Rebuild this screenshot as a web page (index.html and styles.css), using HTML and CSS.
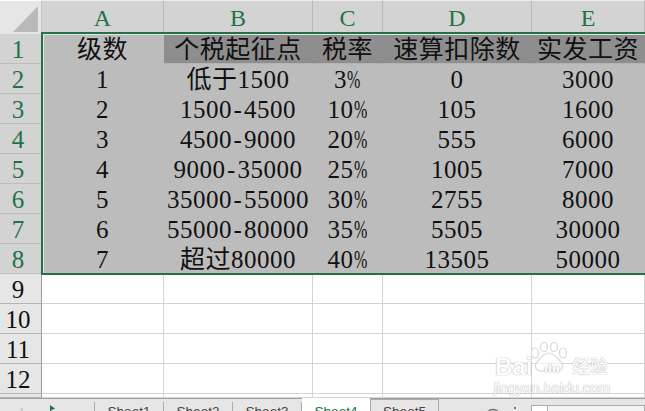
FILE: index.html
```html
<!DOCTYPE html>
<html lang="zh">
<head>
<meta charset="utf-8">
<title>Sheet4</title>
<link rel="stylesheet" href="styles.css">
</head>
<body>
<div class="sheet">
  <div class="grid">
    <div class="corner"><svg class="corner-tri" width="42" height="33" viewBox="0 0 42 33"><path d="M13 31 L38 5 V31 Z" fill="#b9b9b9"/></svg></div>
    <div class="ch">A</div><div class="ch">B</div><div class="ch">C</div><div class="ch">D</div><div class="ch">E</div>

    <div class="rh on">1</div><div class="c s">级数</div><div class="c s d">个税起征点</div><div class="c s d">税率</div><div class="c s d">速算扣除数</div><div class="c s d">实发工资</div>
    <div class="rh on">2</div><div class="c s">1</div><div class="c s">低于1500</div><div class="c s">3<span class="pct">%</span></div><div class="c s">0</div><div class="c s">3000</div>
    <div class="rh on">3</div><div class="c s">2</div><div class="c s">1500<span class="dash">-</span>4500</div><div class="c s">10<span class="pct">%</span></div><div class="c s">105</div><div class="c s">1600</div>
    <div class="rh on">4</div><div class="c s">3</div><div class="c s">4500<span class="dash">-</span>9000</div><div class="c s">20<span class="pct">%</span></div><div class="c s">555</div><div class="c s">6000</div>
    <div class="rh on">5</div><div class="c s">4</div><div class="c s">9000<span class="dash">-</span>35000</div><div class="c s">25<span class="pct">%</span></div><div class="c s">1005</div><div class="c s">7000</div>
    <div class="rh on">6</div><div class="c s">5</div><div class="c s">35000<span class="dash">-</span>55000</div><div class="c s">30<span class="pct">%</span></div><div class="c s">2755</div><div class="c s">8000</div>
    <div class="rh on">7</div><div class="c s">6</div><div class="c s">55000<span class="dash">-</span>80000</div><div class="c s">35<span class="pct">%</span></div><div class="c s">5505</div><div class="c s">30000</div>
    <div class="rh on">8</div><div class="c s">7</div><div class="c s">超过80000</div><div class="c s">40<span class="pct">%</span></div><div class="c s">13505</div><div class="c s">50000</div>
    <div class="rh">9</div><div class="c"></div><div class="c"></div><div class="c"></div><div class="c"></div><div class="c"></div>
    <div class="rh">10</div><div class="c"></div><div class="c"></div><div class="c"></div><div class="c"></div><div class="c"></div>
    <div class="rh">11</div><div class="c"></div><div class="c"></div><div class="c"></div><div class="c"></div><div class="c"></div>
    <div class="rh">12</div><div class="c"></div><div class="c"></div><div class="c"></div><div class="c"></div><div class="c"></div>
    <div class="rh"></div><div class="c"></div><div class="c"></div><div class="c"></div><div class="c"></div><div class="c"></div>
  </div>
  <div class="selection"></div>
  <div class="watermark">
    <svg class="paw" width="38" height="30" viewBox="0 0 38 30">
      <g fill="#fff" fill-opacity="0.55" stroke="#d8d8d8" stroke-width="1.2">
        <ellipse cx="5" cy="11" rx="3.500" ry="5"/><ellipse cx="14" cy="5" rx="3.500" ry="4.500"/><ellipse cx="24" cy="5" rx="3.500" ry="4.500"/><ellipse cx="33" cy="11" rx="3.500" ry="5"/>
        <path d="M19 11 C13 11 11 16 7 20 C3 25 7 30 13 29 C17 28 21 28 25 29 C31 30 35 25 31 20 C27 16 25 11 19 11 Z"/>
      </g>
    </svg>
    <div class="wm-main"><span class="wm-bai">Bai</span><span class="wm-du">du</span><span class="wm-cn">经验</span></div>
    <div class="wm-url">jingyan.baidu.com</div>
  </div>
</div>
<div class="tabbar">
  <div class="nav">
    <svg width="94" height="13" viewBox="0 0 94 13"><path d="M23 9 L19 12 L23 13 Z" fill="#c8c8c8"/><path d="M50 7 L55 10.500 L50 13 Z" fill="#217346"/></svg>
  </div>
  <div class="tab">Sheet1</div>
  <div class="tab">Sheet2</div>
  <div class="tab last">Sheet3</div>
  <div class="tab active">Sheet4</div>
  <div class="tab boxed">Sheet5</div>
  <div class="tools">
    <svg width="16" height="13" viewBox="0 0 16 13"><circle cx="8" cy="14" r="7.500" fill="none" stroke="#6e6e6e" stroke-width="1.300"/><path d="M8 9.500 V14" stroke="#6e6e6e" stroke-width="1.300"/></svg>
    <span class="dots"></span>
    <div class="hscroll"><span class="thumb"></span></div>
  </div>
</div>
</body>
</html>
```
FILE: styles.css
```css
html, body {
  margin: 0;
  padding: 0;
  width: 645px;
  height: 411px;
  overflow: hidden;
  background: #fff;
  font-family: "Liberation Serif", "Noto Sans CJK SC", serif;
}
.sheet {
  position: relative;
  height: 398px;
  overflow: hidden;
}
.grid {
  display: grid;
  grid-template-columns: 42px 122px 149px 70px 149px 113px;
  grid-template-rows: 34px repeat(12, 30px) 4px;
  font-size: 25px;
  color: #111;
}
.corner {
  background: #e6e6e6;
  border-top: 1px solid #fff;
  border-right: 1px solid #c4c4c4;
  box-sizing: border-box;
}
.corner-tri { display: block; }
.ch {
  background: #d3d3d3;
  border-top: 1px solid #f0f0f0;
  border-right: 1px solid #b8b8b8;
  box-sizing: border-box;
  color: #217346;
  font-size: 24px;
  line-height: 35px;
  text-align: center;
}
.rh {
  background: #e6e6e6;
  border-right: 1px solid #9e9e9e;
  border-bottom: 1px solid #b4b4b4;
  box-sizing: border-box;
  font-size: 25px;
  line-height: 32px;
  text-align: center;
  padding-right: 5px;
  color: #111;
}
.rh.on {
  background: #d3d3d3;
  border-bottom-color: #bcbcbc;
  color: #217346;
}
.c {
  border-right: 1px solid #d4d4d4;
  border-bottom: 1px solid #d4d4d4;
  box-sizing: border-box;
  text-align: center;
  line-height: 32px;
  letter-spacing: 0.5px;
  white-space: nowrap;
  overflow: visible;
}
.c.s {
  background: #bcbcbc;
  border-right-color: #bcbcbc;
  border-bottom-color: #bebebe;
}
.c.d {
  background: #8e8e8e;
  border-right-color: #8e8e8e;
  border-bottom-color: #b4b4b4;
  color: #111;
}
.dash { margin: 0 1.500px; }
.pct {
  display: inline-block;
  width: 14px;
  transform: scaleX(0.64);
  transform-origin: left center;
}
.selection {
  position: absolute;
  left: 41px;
  top: 32px;
  width: 610px;
  height: 243px;
  box-sizing: border-box;
  border: 2px solid #217346;
  box-shadow: inset 1px 1px 0 #e4e4e4;
  pointer-events: none;
}
.watermark {
  position: absolute;
  left: 492px;
  top: 340px;
  width: 120px;
  height: 58px;
  font-family: "Liberation Sans", "Noto Sans CJK SC", sans-serif;
  color: #fff;
  text-shadow: 0 0 1px #b4b4b4, 0 0 1px #b4b4b4;
}
.paw {
  position: absolute;
  left: 38px;
  top: 2px;
}
.wm-main {
  position: absolute;
  left: 3px;
  top: 15px;
  width: 117px;
  height: 24px;
  display: flex;
  align-items: center;
  line-height: 24px;
}
.wm-bai {
  width: 37px;
  font-size: 24px;
  font-weight: 700;
}
.wm-du {
  width: 40px;
  font-size: 13px;
  font-weight: 700;
  text-align: center;
  padding-top: 3px;
  box-sizing: border-box;
}
.wm-cn { font-size: 18px; }
.wm-url {
  position: absolute;
  left: 0;
  top: 40px;
  width: 120px;
  text-align: center;
  font-size: 14.500px;
  line-height: 16px;
}
.tabbar {
  display: flex;
  height: 13px;
  box-sizing: border-box;
  background: #e6e6e6;
  border-top: 1px solid #a0a0a0;
  font-family: "Liberation Sans", sans-serif;
  font-size: 13.6px;
  color: #444;
  overflow: visible;
  position: relative;
}
.nav { width: 94px; flex: none; }
.nav svg { display: block; margin-top: -1px; }
.tab {
  width: 69px;
  flex: none;
  box-sizing: border-box;
  border-left: 1px solid #ababab;
  text-align: center;
  line-height: 20px;
  height: 20px;
  margin-top: 3px;
}
.tab.last { border-right: 1px solid #ababab; width: 70px; }
.tab.active {
  width: 68px;
  height: 20px;
  margin-top: -1px;
  padding-top: 4px;
  border-left: 0;
  background: #fff;
  color: #217346;
}
.tab.boxed {
  width: 69px;
  border-right: 1px solid #ababab;
  border-top: 1px solid #ababab;
  margin-top: 0;
  padding-top: 2px;
}
.tools {
  flex: 1;
  display: flex;
  align-items: flex-start;
  padding: 0 0 0 46px;
  height: 12px;
  overflow: hidden;
}
.tools svg { margin-top: 4px; margin-left: 0; flex: none; }
.dots {
  width: 2px;
  height: 2px;
  margin: 8px 15px 0 13px;
  background: #777;
  flex: none;
}
.hscroll {
  flex: 1;
  height: 20px;
  margin-top: 6px;
  box-sizing: border-box;
  border: 1px solid #ababab;
  background: #f4f4f4;
}
.thumb {
  display: block;
  width: 15px;
  height: 20px;
  background: #fff;
  border-right: 1px solid #ababab;
}
```
